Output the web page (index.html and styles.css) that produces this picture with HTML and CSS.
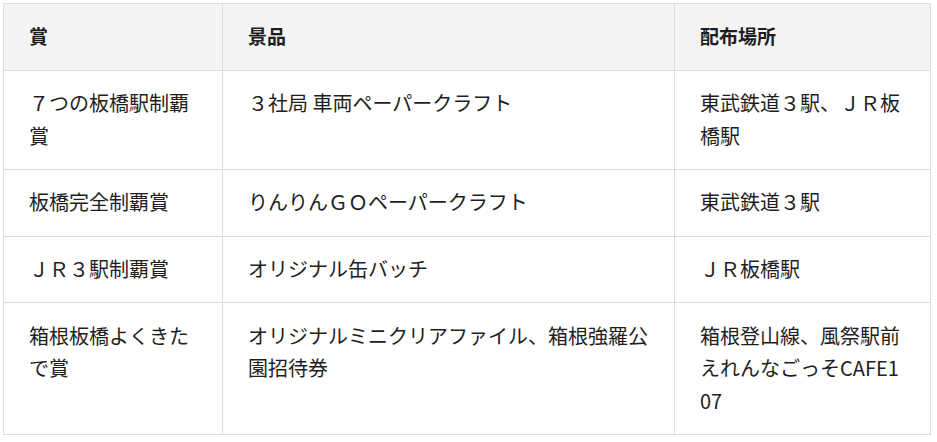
FILE: index.html
```html
<!DOCTYPE html>
<html lang="ja">
<head>
<meta charset="utf-8">
<title>賞品一覧</title>
<link rel="stylesheet" href="styles.css">
</head>
<body>
<div class="wrap">
<table class="prize-table">
  <colgroup>
    <col class="c1">
    <col class="c2">
    <col class="c3">
  </colgroup>
  <thead>
    <tr><th>賞</th><th>景品</th><th>配布場所</th></tr>
  </thead>
  <tbody>
    <tr><td>７つの板橋駅制覇賞</td><td>３社局 車両ペーパークラフト</td><td>東武鉄道３駅、ＪＲ板橋駅</td></tr>
    <tr><td>板橋完全制覇賞</td><td>りんりんＧＯペーパークラフト</td><td>東武鉄道３駅</td></tr>
    <tr><td>ＪＲ３駅制覇賞</td><td>オリジナル缶バッチ</td><td>ＪＲ板橋駅</td></tr>
    <tr><td>箱根板橋よくきたで賞</td><td>オリジナルミニクリアファイル、箱根強羅公園招待券</td><td>箱根登山線、風祭駅前えれんなごっそCAFE107</td></tr>
  </tbody>
</table>
</div>
</body>
</html>
```

FILE: styles.css
```css
html, body {
  margin: 0;
  padding: 0;
  background: #fff;
}
.wrap {
  padding: 3px;
}
.prize-table {
  border-collapse: collapse;
  table-layout: fixed;
  width: 927px;
  font-family: "Noto Sans CJK JP", "Noto Sans", sans-serif;
  font-size: 20px;
  line-height: 32.8px;
  color: #1e1e1e;
}
.c1 { width: 219px; }
.c2 { width: 452px; }
.c3 { width: 256px; }
.prize-table th,
.prize-table td {
  border: 1px solid #dcdcdc;
  padding: 16.4px 25px;
  text-align: left;
  vertical-align: top;
  word-break: break-all;
}
.prize-table th {
  background: #f4f4f4;
  font-weight: bold;
  font-size: 19px;
}
```
